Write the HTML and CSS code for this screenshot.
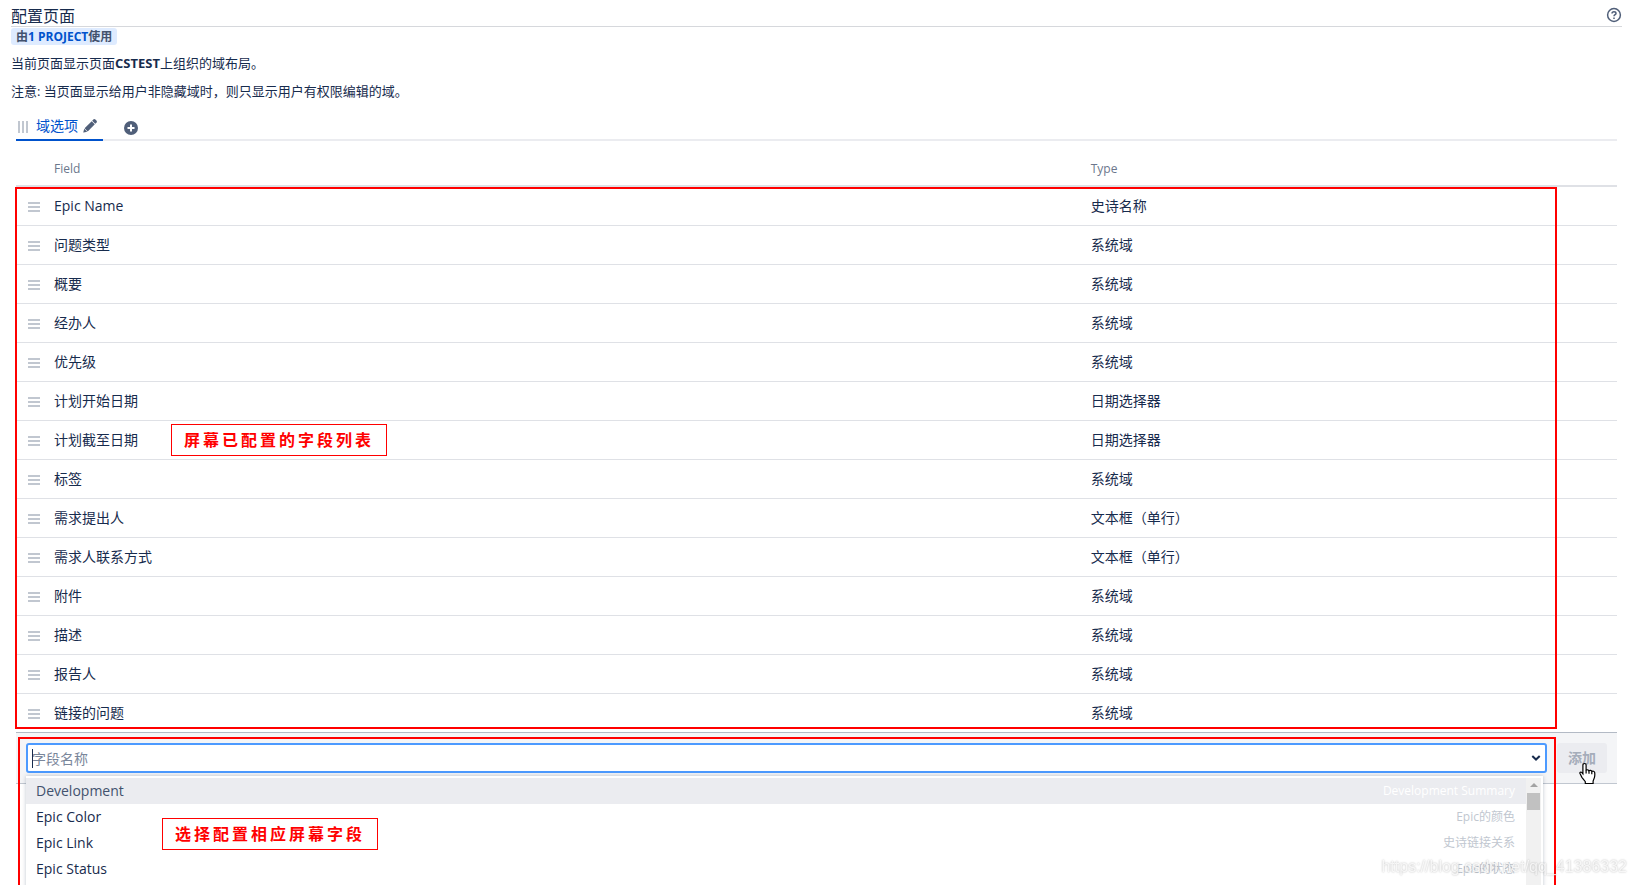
FILE: index.html
```html
<!DOCTYPE html>
<html lang="zh-CN">
<head>
  <meta charset="UTF-8" />
  <meta name="viewport" content="width=device-width, initial-scale=1.0" />
  <title>配置页面</title>
  <link rel="stylesheet" href="styles.css">
</head>
<body>

  <header class="page-header">
    <h1>配置页面</h1>
    <a class="help" href="#" aria-label="帮助">
      <svg width="16" height="16" viewBox="0 0 16 16" fill="none" stroke="#505f79" stroke-width="1.5">
        <circle cx="8" cy="8" r="6.4"/>
        <path d="M6 6.6C6 5.3 6.8 4.7 8 4.7s2 .7 2 1.7c0 1.3-2 1.3-2 2.9"/>
        <path d="M8 10.4v1.5"/>
      </svg>
    </a>
  </header>

  <div class="intro">
    <span class="badge">由<a href="#">1 PROJECT</a>使用</span>
    <p>当前页面显示页面<strong>CSTEST</strong>上组织的域布局。</p>
    <p>注意: 当页面显示给用户非隐藏域时，则只显示用户有权限编辑的域。</p>
  </div>

  <main>
    <nav class="tabs">
      <div class="tab">
        <span class="tab-grip"></span>
        <a href="#">域选项</a>
        <button type="button" aria-label="编辑">
          <svg width="14" height="14" viewBox="0 0 14 14" fill="#505f79">
            <path d="M9.2 1.7 10.3.6a1.5 1.5 0 0 1 2.1 0l1 1a1.5 1.5 0 0 1 0 2.1l-1.1 1.1zM8.7 2.2l3.1 3.1-7.1 7.1-3.1-3.1zM1.2 9.8l3 3-3.5.8c-.3 0-.4-.1-.4-.4z"/>
          </svg>
        </button>
      </div>
      <button class="add-tab" type="button" aria-label="添加选项">
        <svg width="14" height="14" viewBox="0 0 14 14">
          <circle cx="7" cy="7" r="7" fill="#505f79"/>
          <path d="M7 3.5v7M3.5 7h7" stroke="#fff" stroke-width="2"/>
        </svg>
      </button>
    </nav>

    <div class="fields">
      <table>
        <thead>
          <tr><th class="col-grip"></th><th>Field</th><th class="col-type">Type</th></tr>
        </thead>
        <tbody>
          <tr><td><span class="grip"></span></td><td>Epic Name</td><td>史诗名称</td></tr>
          <tr><td><span class="grip"></span></td><td>问题类型</td><td>系统域</td></tr>
          <tr><td><span class="grip"></span></td><td>概要</td><td>系统域</td></tr>
          <tr><td><span class="grip"></span></td><td>经办人</td><td>系统域</td></tr>
          <tr><td><span class="grip"></span></td><td>优先级</td><td>系统域</td></tr>
          <tr><td><span class="grip"></span></td><td>计划开始日期</td><td>日期选择器</td></tr>
          <tr><td><span class="grip"></span></td><td>计划截至日期</td><td>日期选择器</td></tr>
          <tr><td><span class="grip"></span></td><td>标签</td><td>系统域</td></tr>
          <tr><td><span class="grip"></span></td><td>需求提出人</td><td>文本框（单行）</td></tr>
          <tr><td><span class="grip"></span></td><td>需求人联系方式</td><td>文本框（单行）</td></tr>
          <tr><td><span class="grip"></span></td><td>附件</td><td>系统域</td></tr>
          <tr><td><span class="grip"></span></td><td>描述</td><td>系统域</td></tr>
          <tr><td><span class="grip"></span></td><td>报告人</td><td>系统域</td></tr>
          <tr><td><span class="grip"></span></td><td>链接的问题</td><td>系统域</td></tr>
        </tbody>
      </table>
      <div class="frame frame-list"></div>
      <div class="note note-list">屏幕已配置的字段列表</div>
    </div>

    <section class="add-section">
      <form class="add-bar">
        <div class="combo">
          <input type="text" aria-label="字段名称" placeholder="字段名称">
          <span class="caret"></span>
          <svg class="chevron" width="10" height="8" viewBox="0 0 10 8" fill="none" stroke="#172b4d" stroke-width="2">
            <path d="M1.3 2 5 5.5 8.7 2"/>
          </svg>
          <div class="dropdown">
            <ul>
              <li class="active"><span>Development</span><em>Development Summary</em></li>
              <li><span>Epic Color</span><em>Epic的颜色</em></li>
              <li><span>Epic Link</span><em>史诗链接关系</em></li>
              <li><span>Epic Status</span><em>Epic的状态</em></li>
            </ul>
            <div class="scrollbar">
              <span class="scroll-up"></span>
              <span class="scroll-thumb"></span>
            </div>
          </div>
        </div>
        <button class="add-button" type="button">添加</button>
        <svg class="pointer" width="18" height="23" viewBox="0 0 18 23">
          <path d="M5.5 1.5c1 0 1.6.7 1.6 1.6v5.2c.4-.8 2.5-.7 2.9.4.7-.7 2.4-.5 2.8.7.9-.6 2.7-.2 2.9 1.3.2 1.6.2 3.3-.3 4.9l-1.3 3.5v2.4H6.3v-1.9L2.9 15.3 1 11.6c-.5-1.1.8-2 1.7-1.2l1.2 1.4V3.1c0-.9.6-1.6 1.6-1.6z" fill="#fff" stroke="#000" stroke-width="1.2"/>
          <path d="M7.1 8v3.5M10 8.7v3M12.8 9.5v2.7" stroke="#000" stroke-width="1.2"/>
        </svg>
      </form>
      <div class="frame frame-add"></div>
      <div class="note note-add">选择配置相应屏幕字段</div>
    </section>
  </main>

  <div class="watermark">https://blog.csdn.net/qq_41386332</div>

</body>
</html>
```

FILE: styles.css
```css
* {
  margin: 0;
  padding: 0;
  box-sizing: border-box;
}

body {
  height: 100vh;
  display: flex;
  flex-direction: column;
  overflow: hidden;
  background-color: #fff;
  color: #172b4d;
  font-family: "Open Sans", "Noto Sans CJK SC", sans-serif;
  font-size: 14px;
  line-height: 20px;
}

button,
input {
  font: inherit;
  border: none;
  background: none;
}

a {
  color: #0052cc;
  text-decoration: none;
}

svg {
  display: block;
}

.page-header {
  display: flex;
  align-items: center;
  justify-content: space-between;
  height: 27px;
  margin: 0 14px 0 11px;
  padding-top: 6px;
  border-bottom: 1px solid #d6d8dc;
}

.page-header h1 {
  font-size: 16px;
  font-weight: 400;
}

.help {
  padding-bottom: 2px;
}

.intro {
  padding: 1px 11px 0;
  font-size: 13px;
}

.badge {
  display: block;
  width: fit-content;
  padding: 0 5px;
  border-radius: 3px;
  background-color: #deebff;
  color: #42526e;
  font-size: 12px;
  font-weight: 700;
  line-height: 17px;
}

.intro p {
  margin-top: 8px;
}

main {
  flex: 1;
  display: flex;
  flex-direction: column;
  margin: 11px 19px 0 16px;
}

.tabs {
  display: flex;
  height: 29px;
  border-bottom: 2px solid #ebecf0;
}

.tab {
  display: flex;
  align-items: center;
  height: 29px;
  padding: 0 6px 0 2px;
  border-bottom: 2px solid #0052cc;
}

.tab a {
  margin: 0 5px 0 7px;
}

.tab-grip {
  width: 11px;
  height: 12px;
  margin-top: 2px;
  background: repeating-linear-gradient(to right, #c1c7d0 0 2px, transparent 2px 4px);
}

.add-tab {
  margin-left: 21px;
  padding-top: 4px;
}

.fields {
  position: relative;
}

table {
  width: 100%;
  border-collapse: separate;
  border-spacing: 0;
  table-layout: fixed;
}

th {
  height: 46px;
  padding: 12px 10px 0;
  border-bottom: 2px solid #dfe1e6;
  color: #6b778c;
  font-size: 12px;
  font-weight: 400;
  text-align: left;
}

.col-grip {
  width: 28px;
}

.col-type {
  width: 33.5%;
}

td {
  height: 39px;
  padding: 0 10px 1px;
  border-bottom: 1px solid #dfe1e6;
}

tr:last-child td {
  height: 38px;
  border-bottom: none;
}

td:first-child {
  padding: 0 0 0 12px;
}

.grip {
  display: block;
  width: 12px;
  height: 10px;
  margin-top: 2px;
  background: repeating-linear-gradient(#c1c7d0 0 2px, transparent 2px 4px);
}

.add-section {
  position: relative;
  flex: 1;
}

.add-bar {
  position: relative;
  display: flex;
  gap: 10px;
  padding: 10px;
  border-top: 1px solid #b3bac5;
  border-bottom: 1px solid #c1c7d0;
  background-color: #f4f5f7;
}

.combo {
  position: relative;
  flex: 1;
}

.combo input {
  display: block;
  width: 100%;
  height: 30px;
  padding: 0 4px;
  border: 2px solid #4c9aff;
  border-radius: 3px;
  background-color: #fff;
}

.combo input::placeholder {
  color: #7a869a;
}

.caret {
  position: absolute;
  top: 6px;
  left: 6px;
  width: 1px;
  height: 19px;
  background-color: #172b4d;
}

.chevron {
  position: absolute;
  top: 11px;
  right: 6px;
}

.dropdown {
  position: absolute;
  z-index: 2;
  top: 33px;
  left: 0;
  right: 4px;
  display: flex;
  padding: 2px 2px 0 0;
  background-color: #fff;
  box-shadow: 0 0 4px rgba(9, 30, 66, 0.25);
}

.dropdown ul {
  flex: 1;
  padding-bottom: 8px;
  list-style: none;
}

.dropdown li {
  display: flex;
  justify-content: space-between;
  padding: 3px 11px 3px 10px;
}

.dropdown li.active {
  background-color: #ebecf0;
  color: #42526e;
}

.dropdown em {
  color: #c1c7d0;
  font-size: 12px;
  font-style: normal;
}

.dropdown .active em {
  color: #fff;
}

.scrollbar {
  width: 15px;
  padding-top: 5px;
  background-color: #f1f1f1;
}

.scroll-up {
  display: block;
  width: 8px;
  margin: 0 auto 6px;
  border: 4px solid transparent;
  border-top: none;
  border-bottom-color: #a3a3a3;
}

.scroll-thumb {
  display: block;
  width: 13px;
  height: 17px;
  margin: 0 auto;
  background-color: #c1c1c1;
}

.add-button {
  width: 50px;
  height: 30px;
  border-radius: 3px;
  background-color: #ebecf0;
  color: #a5adba;
  font-weight: 600;
}

.pointer {
  position: absolute;
  right: 20px;
  bottom: -2px;
}

/* red frames and captions drawn over the page */
.frame {
  position: absolute;
  z-index: 3;
  border: 2px solid #f00;
  pointer-events: none;
}

.frame-list {
  top: 46px;
  bottom: 3px;
  left: -1px;
  right: 60px;
}

.frame-add {
  top: 5px;
  bottom: -2px;
  left: 2px;
  right: 61px;
}

.note {
  position: absolute;
  z-index: 3;
  padding: 0 12px;
  border: 1px solid #f00;
  background-color: #fff;
  color: #f00;
  font-size: 16px;
  font-weight: 700;
  letter-spacing: 3px;
  line-height: 30px;
}

.note-list {
  top: 283px;
  left: 155px;
}

.note-add {
  top: 86px;
  left: 146px;
}

.watermark {
  position: fixed;
  z-index: 4;
  right: 9px;
  bottom: 8px;
  color: rgba(255, 255, 255, 0.8);
  font-family: "Liberation Sans", sans-serif;
  font-size: 16px;
  text-shadow: 0 0 2px rgba(0, 0, 0, 0.3);
}
```
